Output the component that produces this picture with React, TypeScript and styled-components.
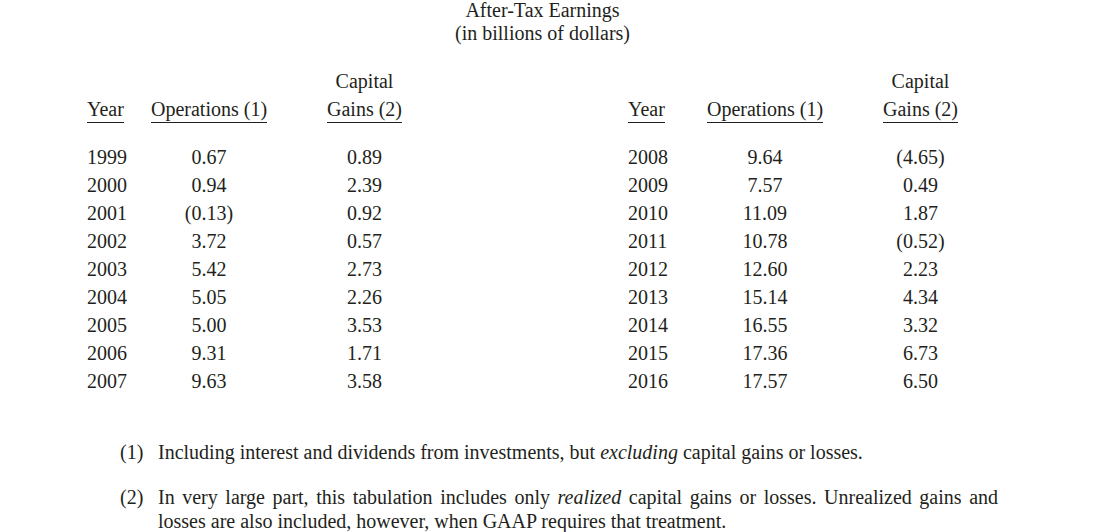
import React from "react";
import styled, { createGlobalStyle } from "styled-components";

const Global = createGlobalStyle`
  html, body { margin: 0; padding: 0; background: #ffffff; }
  body {
    font-family: "Liberation Serif", "Times New Roman", serif;
    color: #231f20;
    font-size: 20px;
  }
`;

const Page = styled.div`
  width: 911px;
  margin-left: 87px;
`;

const Title = styled.div`
  text-align: center;
  line-height: 23px;
  margin-top: -1px;
`;

const Tables = styled.div`
  display: flex;
  gap: 191px;
  margin-top: 22px;
`;

const Table = styled.div<{ $yearW: number }>`
  display: grid;
  grid-template-columns: ${(p) => p.$yearW}px 116px 145px;
  grid-template-rows: 28px 28px 20px;
  column-gap: 25px;
  grid-auto-rows: 28px;
  align-items: center;
`;

const HeadCell = styled.div<{ $left?: boolean }>`
  text-align: ${(p) => (p.$left ? "left" : "center")};
  line-height: 28px;
  white-space: nowrap;
`;

const UnderHead = styled.span`
  display: inline-block;
  line-height: 22px;
  padding-bottom: 2px;
  border-bottom: 1px solid #231f20;
`;

const Cell = styled.div<{ $left?: boolean }>`
  text-align: ${(p) => (p.$left ? "left" : "center")};
  white-space: nowrap;
`;

const Spacer = styled.div`
  grid-column: 1 / -1;
`;

const Notes = styled.div`
  margin-left: 33px;
  margin-top: 45px;
  display: flex;
  flex-direction: column;
  gap: 21px;
`;

const Note = styled.div`
  display: grid;
  grid-template-columns: 38px 1fr;
  line-height: 24px;
`;

const NoteText = styled.div`
  text-align: justify;
`;

type Row = [string, string, string];

const left: Row[] = [
  ["1999", "0.67", "0.89"],
  ["2000", "0.94", "2.39"],
  ["2001", "(0.13)", "0.92"],
  ["2002", "3.72", "0.57"],
  ["2003", "5.42", "2.73"],
  ["2004", "5.05", "2.26"],
  ["2005", "5.00", "3.53"],
  ["2006", "9.31", "1.71"],
  ["2007", "9.63", "3.58"],
];

const right: Row[] = [
  ["2008", "9.64", "(4.65)"],
  ["2009", "7.57", "0.49"],
  ["2010", "11.09", "1.87"],
  ["2011", "10.78", "(0.52)"],
  ["2012", "12.60", "2.23"],
  ["2013", "15.14", "4.34"],
  ["2014", "16.55", "3.32"],
  ["2015", "17.36", "6.73"],
  ["2016", "17.57", "6.50"],
];

function EarningsTable({ rows, yearW }: { rows: Row[]; yearW: number }) {
  return (
    <Table $yearW={yearW}>
      <HeadCell $left />
      <HeadCell />
      <HeadCell>Capital</HeadCell>
      <HeadCell $left>
        <UnderHead>Year</UnderHead>
      </HeadCell>
      <HeadCell>
        <UnderHead>Operations (1)</UnderHead>
      </HeadCell>
      <HeadCell>
        <UnderHead>Gains (2)</UnderHead>
      </HeadCell>
      <Spacer />
      {rows.map((r) => (
        <React.Fragment key={r[0]}>
          <Cell $left>{r[0]}</Cell>
          <Cell>{r[1]}</Cell>
          <Cell>{r[2]}</Cell>
        </React.Fragment>
      ))}
    </Table>
  );
}

export default function App() {
  return (
    <>
      <Global />
      <Page>
        <Title>
          After-Tax Earnings
          <br />
          (in billions of dollars)
        </Title>
        <Tables>
          <EarningsTable rows={left} yearW={39} />
          <EarningsTable rows={right} yearW={54} />
        </Tables>
        <Notes>
          <Note>
            <span>(1)</span>
            <NoteText>
              Including interest and dividends from investments, but <em>excluding</em> capital gains or losses.
            </NoteText>
          </Note>
          <Note>
            <span>(2)</span>
            <NoteText>
              In very large part, this tabulation includes only <em>realized</em> capital gains or losses. Unrealized
              gains and losses are also included, however, when GAAP requires that treatment.
            </NoteText>
          </Note>
        </Notes>
      </Page>
    </>
  );
}
